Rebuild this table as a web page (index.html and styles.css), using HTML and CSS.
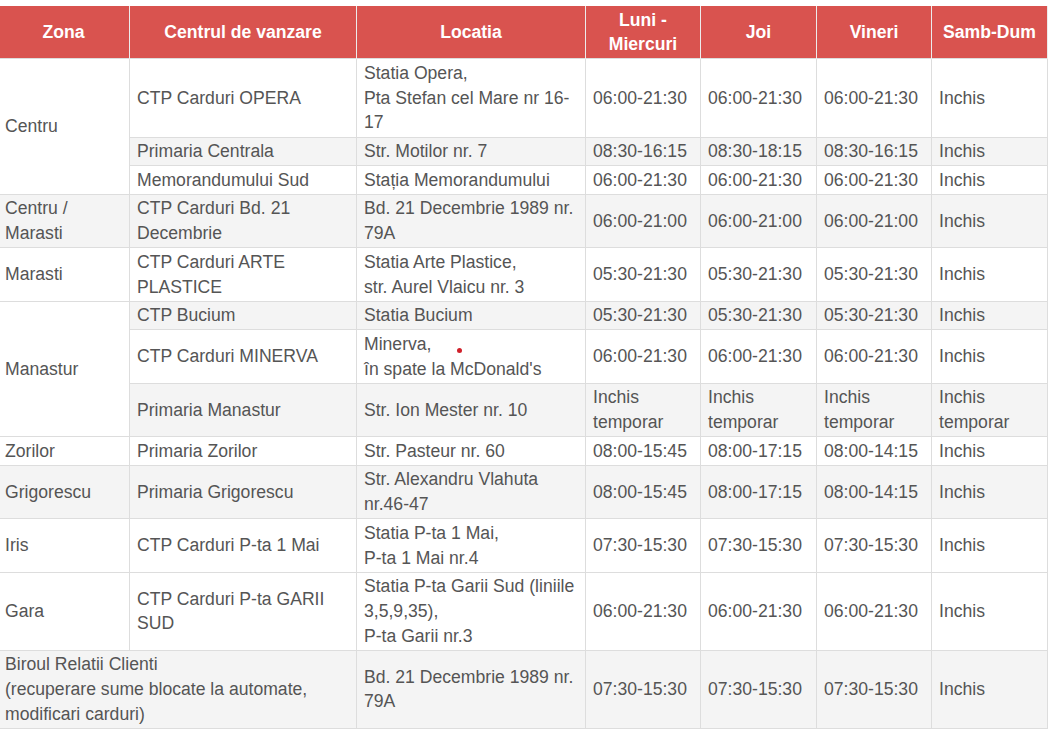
FILE: index.html
```html
<!DOCTYPE html>
<html lang="ro">
<head>
<meta charset="utf-8">
<title>Centre de vanzare</title>
<link rel="stylesheet" href="styles.css">
</head>
<body>
<div class="wrap">
<table class="schedule">
  <colgroup>
    <col class="c-zona">
    <col class="c-centru">
    <col class="c-loc">
    <col class="c-day">
    <col class="c-day2">
    <col class="c-day">
    <col class="c-day2">
  </colgroup>
  <thead>
    <tr>
      <th>Zona</th>
      <th>Centrul de vanzare</th>
      <th>Locatia</th>
      <th>Luni - Miercuri</th>
      <th>Joi</th>
      <th>Vineri</th>
      <th>Samb-Dum</th>
    </tr>
  </thead>
  <tbody>
    <tr>
      <td rowspan="3" class="zone">Centru</td>
      <td>CTP Carduri OPERA</td>
      <td>Statia Opera,<br>Pta Stefan cel Mare nr 16-17</td>
      <td>06:00-21:30</td><td>06:00-21:30</td><td>06:00-21:30</td><td>Inchis</td>
    </tr>
    <tr class="alt">
      <td>Primaria Centrala</td>
      <td>Str. Motilor nr. 7</td>
      <td>08:30-16:15</td><td>08:30-18:15</td><td>08:30-16:15</td><td>Inchis</td>
    </tr>
    <tr>
      <td>Memorandumului Sud</td>
      <td>Stația Memorandumului</td>
      <td>06:00-21:30</td><td>06:00-21:30</td><td>06:00-21:30</td><td>Inchis</td>
    </tr>
    <tr class="alt">
      <td>Centru / Marasti</td>
      <td>CTP Carduri Bd. 21 Decembrie</td>
      <td>Bd. 21 Decembrie 1989 nr. 79A</td>
      <td>06:00-21:00</td><td>06:00-21:00</td><td>06:00-21:00</td><td>Inchis</td>
    </tr>
    <tr>
      <td>Marasti</td>
      <td>CTP Carduri ARTE PLASTICE</td>
      <td>Statia Arte Plastice,<br>str. Aurel Vlaicu nr. 3</td>
      <td>05:30-21:30</td><td>05:30-21:30</td><td>05:30-21:30</td><td>Inchis</td>
    </tr>
    <tr class="alt">
      <td rowspan="3" class="zone">Manastur</td>
      <td>CTP Bucium</td>
      <td>Statia Bucium</td>
      <td>05:30-21:30</td><td>05:30-21:30</td><td>05:30-21:30</td><td>Inchis</td>
    </tr>
    <tr>
      <td>CTP Carduri MINERVA</td>
      <td class="dotcell">Minerva,<br>în spate la McDonald's<span class="dot"></span></td>
      <td>06:00-21:30</td><td>06:00-21:30</td><td>06:00-21:30</td><td>Inchis</td>
    </tr>
    <tr class="alt">
      <td>Primaria Manastur</td>
      <td>Str. Ion Mester nr. 10</td>
      <td>Inchis temporar</td><td>Inchis temporar</td><td>Inchis temporar</td><td>Inchis temporar</td>
    </tr>
    <tr>
      <td>Zorilor</td>
      <td>Primaria Zorilor</td>
      <td>Str. Pasteur nr. 60</td>
      <td>08:00-15:45</td><td>08:00-17:15</td><td>08:00-14:15</td><td>Inchis</td>
    </tr>
    <tr class="alt">
      <td>Grigorescu</td>
      <td>Primaria Grigorescu</td>
      <td>Str. Alexandru Vlahuta nr.46-47</td>
      <td>08:00-15:45</td><td>08:00-17:15</td><td>08:00-14:15</td><td>Inchis</td>
    </tr>
    <tr>
      <td>Iris</td>
      <td>CTP Carduri P-ta 1 Mai</td>
      <td>Statia P-ta 1 Mai,<br>P-ta 1 Mai nr.4</td>
      <td>07:30-15:30</td><td>07:30-15:30</td><td>07:30-15:30</td><td>Inchis</td>
    </tr>
    <tr>
      <td>Gara</td>
      <td>CTP Carduri P-ta GARII SUD</td>
      <td>Statia P-ta Garii Sud (liniile 3,5,9,35),<br>P-ta Garii nr.3</td>
      <td>06:00-21:30</td><td>06:00-21:30</td><td>06:00-21:30</td><td>Inchis</td>
    </tr>
    <tr class="alt">
      <td colspan="2">Biroul Relatii Clienti<br>(recuperare sume blocate la automate, modificari carduri)</td>
      <td>Bd. 21 Decembrie 1989 nr. 79A</td>
      <td>07:30-15:30</td><td>07:30-15:30</td><td>07:30-15:30</td><td>Inchis</td>
    </tr>
  </tbody>
</table>
</div>
</body>
</html>
```

FILE: styles.css
```css
html, body {
  margin: 0;
  padding: 0;
  background: #ffffff;
}

.wrap {
  padding-top: 6px;
  overflow: hidden;
}

.schedule {
  margin-left: -3px;
  width: 1051px;
  table-layout: fixed;
  border-collapse: collapse;
  font-family: "Liberation Sans", Arial, sans-serif;
  font-size: 17.6px;
  line-height: 24.7px;
  color: #555555;
}

.c-zona { width: 132px; }
.c-centru { width: 227px; }
.c-loc { width: 229px; }
.c-day { width: 115px; }
.c-day2 { width: 116px; }

.schedule th {
  background: #d9534f;
  color: #ffffff;
  font-weight: bold;
  text-align: center;
  vertical-align: middle;
  padding: 1.5px 7px;
  border: 1px solid #ececec;
  border-top: none;
  border-bottom: none;
}

.schedule td {
  padding: 1.5px 7px;
  border: 1px solid #dddddd;
  vertical-align: middle;
  text-align: left;
  background: #ffffff;
}

.schedule tr.alt td {
  background: #f4f4f4;
}

.schedule tr.alt td.zone {
  background: #ffffff;
}

.dotcell {
  position: relative;
}

.dot {
  position: absolute;
  left: 100px;
  top: 18px;
  width: 5px;
  height: 5px;
  border-radius: 50%;
  background: #d0202a;
}
```
